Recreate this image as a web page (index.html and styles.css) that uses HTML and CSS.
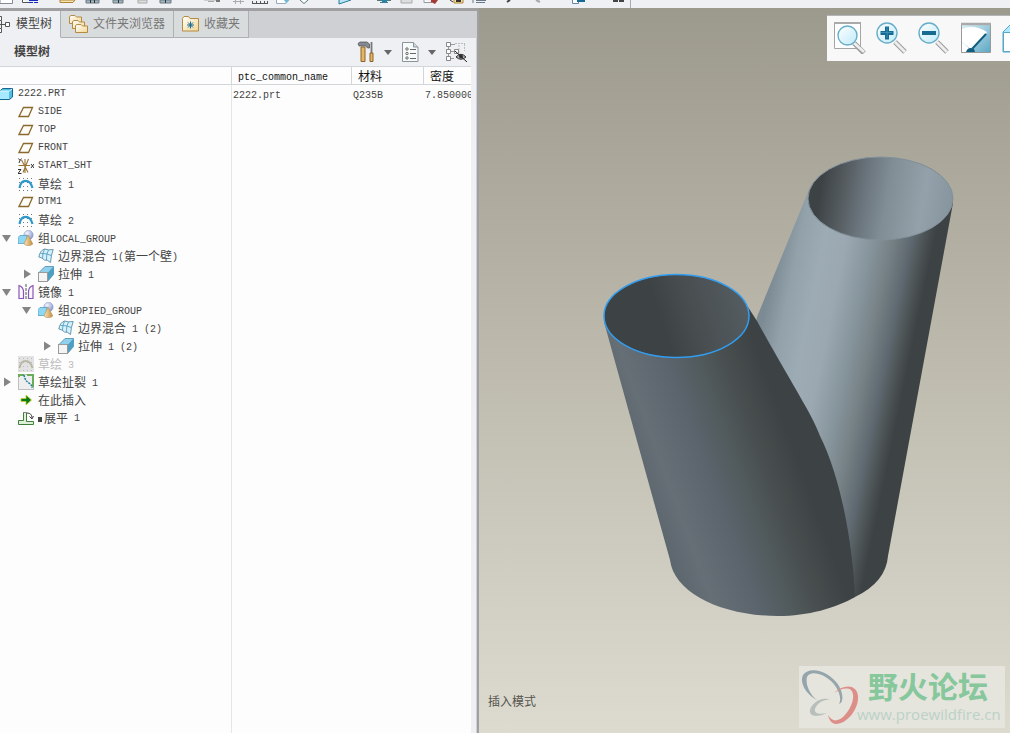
FILE: index.html
```html
<!DOCTYPE html>
<html lang="zh-CN">
<head>
<meta charset="utf-8">
<title>2222.PRT</title>
<link rel="stylesheet" href="styles.css">
</head>
<body>
<svg class="defs" aria-hidden="true">
  <defs>
    <linearGradient id="gold" x1="0" y1="0" x2="1" y2="1"><stop offset="0" stop-color="#fff"/><stop offset="1" stop-color="#f3d692"/></linearGradient>
    <linearGradient id="lens" x1="0" y1="0" x2="1" y2="1"><stop offset="0" stop-color="#fff"/><stop offset="1" stop-color="#bfeafa"/></linearGradient>
    <linearGradient id="pane" x1="0" y1="0" x2="1" y2="1"><stop offset="0" stop-color="#e4f3f8"/><stop offset="1" stop-color="#5aa7c4"/></linearGradient>
    <radialGradient id="ball" cx=".35" cy=".3" r=".8"><stop offset="0" stop-color="#f2f5ff"/><stop offset="1" stop-color="#7f90c8"/></radialGradient>
    <linearGradient id="cone" x1="0" x2="1"><stop offset="0" stop-color="#fbe9bd"/><stop offset="1" stop-color="#c08a3c"/></linearGradient>
  </defs>
  <symbol id="i-plane" viewBox="0 0 16 16"><path d="M5.500 3.500H14.500L10.500 12.500H1Z" fill="#fdfcf8" stroke="#8a6a2c" stroke-width="1.300"/></symbol>
  <symbol id="i-sketch" viewBox="0 0 16 16">
    <path d="M1 2.500H16M1 6.500H16M1 10.500H16M1 14.500H16" stroke="#777" stroke-dasharray="1 3"/>
    <path d="M1.500 12C3 2.500 12 2.500 14.500 12" fill="none" stroke="#2c98cc" stroke-width="2.200"/></symbol>
  <symbol id="i-sketch-off" viewBox="0 0 16 16"><rect width="16" height="16" fill="#e2e2e2"/>
    <path d="M1 2.500H16M1 6.500H16M1 10.500H16M1 14.500H16" stroke="#bbb" stroke-dasharray="1 3"/>
    <path d="M1.500 12C3 2.500 12 2.500 14.500 12" fill="none" stroke="#b9b7a5" stroke-width="2"/></symbol>
  <symbol id="i-group" viewBox="0 0 16 16"><circle cx="10.500" cy="5" r="4.700" fill="url(#ball)" stroke="#8c98c4" stroke-width=".5"/>
    <path d="M0 7.500L2 5.500H9V12L7.500 13.500H0Z" fill="#8fd8f4" stroke="#4697c0" stroke-width=".7"/>
    <path d="M10 5L14.800 14Q10.500 17.500 6 14Z" fill="url(#cone)" stroke="#b78b4a" stroke-width=".6"/></symbol>
  <symbol id="i-blend" viewBox="0 0 16 16"><path d="M.8 9Q2 2.500 6.500 1Q10 2.500 15.200 1.500Q13 7 12.500 14.500Q9.500 11.500 6.500 12Q4 9.500.8 9Z" fill="#d5f2fc" stroke="#5a8ca6" stroke-width=".9"/>
    <path d="M2.500 5.500Q8 5 13.300 7.500M10.500 2Q8 6 8.500 12M6.500 1.200Q4.500 5 4.500 10" fill="none" stroke="#4a94ba" stroke-width=".8"/></symbol>
  <symbol id="i-extrude" viewBox="0 0 16 16"><path d="M.5 7L7 .5H15.500V8.500L9.500 15.500H.5Z" fill="#8fd0ec" stroke="#4c8cab" stroke-width=".8"/>
    <path d="M9.500 7L15.500.5V8.500L9.500 15.500Z" fill="#4f9fc2"/><rect x=".5" y="6.500" width="9" height="9" fill="#f4f4f4" stroke="#9a9a9a"/></symbol>
  <symbol id="i-mirror" viewBox="0 0 16 16"><path d="M1 14.500V1.500Q5.500 3 5.500 8V14.500ZM15 14.500V1.500Q10.500 3 10.500 8V14.500Z" fill="#fbf7ff" stroke="#8a57b2" stroke-width="1.200"/><path d="M8 0V16" stroke="#555" stroke-dasharray="3 1"/></symbol>
  <symbol id="i-csys" viewBox="0 0 16 16"><path d="M.5 7.500H12M3.500 2L10 14.500M10.500 1L5 14.500M7 1V15" stroke="#9a7434" stroke-width="1.100"/>
    <path d="M.5.500L2 2.500L3.500.500M2 2.500L1 5M13 6L16 10M16 6L13 10M0 11.500H3L0 15.500H3.500" stroke="#333" fill="none"/></symbol>
  <symbol id="i-rip" viewBox="0 0 16 16"><rect x=".5" y=".5" width="15" height="15" fill="#eee" stroke="#888" stroke-dasharray="1 1"/>
    <path d="M1 0V3M0 1H6M9 1H15V13" stroke="#69ad58" stroke-width="2" fill="none"/><path d="M6 1Q7 7 11 9Q14 11 14 14" stroke="#147a9a" stroke-width="1.400" stroke-dasharray="2 1" fill="none"/></symbol>
  <symbol id="i-insert" viewBox="0 0 16 16"><path d="M3 6.500H8V3L13.500 8L8 13V9.500H3Z" fill="#087b16" stroke="#c5cf28" stroke-width=".8"/></symbol>
  <symbol id="i-flat" viewBox="0 0 16 16"><path d="M.5 10.500H5.500V2.500H8.500V11.500H15.500V14.500H.5Z" fill="#dff0d8" stroke="#3f7d3a"/><path d="M6 2.500H9" stroke="#888"/><path d="M9 3Q14 3 14 8M11.500 6.500L14 9L15.500 6" fill="none" stroke="#444"/></symbol>
  <symbol id="i-part" viewBox="0 0 14 14"><path d="M0 4L2.500 1.500H12.500V10L9.500 12.500H0Z" fill="#52bde6" stroke="#17678c"/><path d="M0 4H9V12H0Z" fill="#a7eaff"/><path d="M0 4H9.500L12 2" stroke="#dff8ff" fill="none"/></symbol>
  <symbol id="i-open" viewBox="0 0 10 10"><path d="M0 2H9L4.500 9Z" fill="#858585"/></symbol>
  <symbol id="i-shut" viewBox="0 0 10 10"><path d="M2 .500V9.500L9 5Z" fill="#858585"/></symbol>
  <symbol id="i-down" viewBox="0 0 8 5"><path d="M0 0H8L4 5Z" fill="#666"/></symbol>
</svg>

<div class="app">
  <header class="ribbon" aria-label="工具栏">
    <svg class="ribbon-icons" viewBox="0 0 640 8" aria-hidden="true">
      <path d="M0 0V3.500H12.500V0" fill="#fff" stroke="#889"/>
      <path d="M22.500 0V2.500H29" fill="#fff" stroke="#555"/><path d="M29 .5H38M29 2.500H33M34 2.500H38" stroke="#1428c0"/>
      <path d="M60 0V2.500H73L75 0Z" fill="#f8e4ae" stroke="#ad8438"/>
      <path d="M86 0V3H99V0ZM113 0V3H123V0ZM160 0V3H171V0Z" fill="#96b9ca" stroke="#777"/><path d="M138 0V3H147V0Z" fill="#ddd" stroke="#aaa"/>
      <path d="M90.500 0V3M94.500 0V3M118.500 0V3M165.500 0V3" stroke="#333"/>
      <path d="M204 0H218M208 1.500H214M233 1.500H244M235.500 0V4M240.500 0V4" stroke="#aaa" fill="none"/><path d="M216 0H220V2H216Z" fill="#777"/>
      <path d="M252 3.500H268M252.500 1V3M256.500 1V3M260.500 1V3M264.500 1V3M267.500 1V3" stroke="#555"/>
      <path d="M276.500 0V3.500H286L289 0" fill="#fff" stroke="#9ab"/><path d="M284 0H289L286 3Z" fill="#67b9d8"/>
      <path d="M300 0L304 3.500L308 0" fill="#fff" stroke="#577"/><path d="M339 0V4L351 0" fill="#b7e5f4" stroke="#297c9b"/>
      <path d="M377 .5H391M380 2.500H388" stroke="#577"/><path d="M382 0H387V3H382Z" fill="#2c83a8"/><path d="M401 0V3H412V0" fill="#ddd" stroke="#aaa"/>
      <path d="M424 0V2.500H432" fill="#fff" stroke="#999"/><path d="M431 0H438L435 4L431 2Z" fill="#a43a36"/>
      <path d="M450 0L453 2" stroke="#333"/><path d="M454 0V3H463V0" fill="#f9dfa4" stroke="#ad8438"/><path d="M456 1H461" stroke="#333" stroke-width="2"/>
      <path d="M473 0V3M476 .5H486M476 2.500H485" stroke="#678"/><path d="M507 2L510 0" stroke="#444" stroke-width="2"/><path d="M536 0L540 2" stroke="#aaa" stroke-width="2"/>
      <path d="M572.500 0V3.500H578.500V0" fill="#fff" stroke="#68a"/><path d="M577 0H585V2H577Z" fill="#176b92"/><path d="M613 0H618V2H613ZM619 0H624V2H619Z" fill="#444"/><path d="M630.500 0V8" stroke="#aaa"/>
    </svg>
  </header>

  <aside class="navigator">
    <nav class="tabs" role="tablist">
      <button class="tab active" role="tab" aria-selected="true">
        <svg class="tab-tree" viewBox="0 0 10 20"><path d="M0 10.500H5M1.500 7V14" stroke="#555"/><g fill="#fff" stroke="#555"><path d="M-3 2.500H1.500V6.500H-3ZM5.500 8.500H9.500V12.500H5.500ZM-3 14.500H1.500V18.500H-3Z"/></g></svg>
        <span>模型树</span></button>
      <button class="tab" role="tab" aria-selected="false">
        <svg class="tab-folders" viewBox="0 0 20 20"><g fill="url(#gold)" stroke="#b58b43"><path d="M.5 9.500V2.500L2 1.500H6L7.500 3H12.500V9.500Z"/><path d="M3.500 14.500V7.500L5 6.500H9L10.500 8H15.500V14.500Z"/><path d="M6.500 18.500V11.500L8 10.500H12L13.500 12H18.500V18.500Z"/></g></svg>
        <span>文件夹浏览器</span></button>
      <button class="tab" role="tab" aria-selected="false">
        <svg class="tab-fav" viewBox="0 0 18 16"><path d="M.5 15V2.500L2 .500H6.500L8 2.500H16.500V15Z" fill="url(#gold)" stroke="#b58b43"/><path d="M8.500 5.500V12.500M5 9H12M6 6.500L11 11.500M11 6.500L6 11.500" stroke="#176b92"/></svg>
        <span>收藏夹</span></button>
    </nav>

    <div class="panel">
      <div class="panel-head">
        <h1>模型树</h1>
        <div class="tools">
          <button aria-label="设置"><svg width="18" height="22" viewBox="0 0 18 22"><path d="M1 2.500L3 1H10L12.500 3V7H10.500L9 5H2Z" fill="#858991" stroke="#4b4d53" stroke-width=".7"/><path d="M4 6H8V20.500H4Z" fill="#e3b565" stroke="#8e642a"/><path d="M14.500 1V12" stroke="#777" stroke-width="1.800"/><path d="M13 12H16V20.500H13Z" fill="#e3b565" stroke="#8e642a"/></svg></button>
          <button aria-label="设置菜单"><svg width="8" height="5"><use href="#i-down"/></svg></button>
          <button aria-label="显示"><svg width="17" height="20" viewBox="0 0 17 20"><path d="M.5.500H11.500L16 5V19.500H.5Z" fill="#f7fafb" stroke="#8d9499"/><path d="M11.500.500V5H16" fill="#c9d9df" stroke="#8d9499"/><g fill="none" stroke="#666"><circle cx="5" cy="7" r="1.200"/><circle cx="5" cy="11.500" r="1.200"/><circle cx="5" cy="16" r="1.200"/><path d="M8 7.500H14M8 11.500H14M8 16.500H14"/></g></svg></button>
          <button aria-label="显示菜单"><svg width="8" height="5"><use href="#i-down"/></svg></button>
          <button aria-label="隐藏项"><svg width="22" height="20" viewBox="0 0 22 20"><path d="M2.500 3V17M5 2.500H9M5 9.500H9M5 16.500H8" stroke="#999"/><path d="M9 1.500H19M13 3V14M18.500 2V9" stroke="#bbb" stroke-dasharray="2 1" fill="none"/><g fill="#fff" stroke="#888"><path d="M.5.500H4.500V4.500H.5ZM.5 7.500H4.500V11.500H.5ZM.5 14.500H4.500V18.500H.5ZM8.500 7.500H12.500V11.500H8.500Z"/></g><path d="M10 15Q15 9.500 20 15Q15 19.500 10 15Z" fill="#aaa" stroke="#333"/><circle cx="15" cy="14.500" r="2" fill="#333"/><path d="M9 9L21 20" stroke="#222"/></svg></button>
        </div>
      </div>

      <div class="grid">
      <table class="tree">
        <colgroup><col class="c-name"><col class="c-common"><col class="c-mat"><col></colgroup>
        <thead><tr><th aria-label="名称"></th><th><span class="m">ptc_common_name</span></th><th>材料</th><th>密度</th></tr></thead>
        <tbody>
          <tr><td><div class="node root"><svg><use href="#i-part"/></svg><span class="m">2222.PRT</span></div></td><td><span class="m">2222.prt</span></td><td><span class="m">Q235B</span></td><td><span class="m">7.850000</span></td></tr>
          <tr><td><div class="node"><svg><use href="#i-plane"/></svg><span class="m">SIDE</span></div></td></tr>
          <tr><td><div class="node"><svg><use href="#i-plane"/></svg><span class="m">TOP</span></div></td></tr>
          <tr><td><div class="node"><svg><use href="#i-plane"/></svg><span class="m">FRONT</span></div></td></tr>
          <tr><td><div class="node"><svg><use href="#i-csys"/></svg><span class="m">START_SHT</span></div></td></tr>
          <tr><td><div class="node"><svg><use href="#i-sketch"/></svg><span class="label">草绘<span class="m"> 1</span></span></div></td></tr>
          <tr><td><div class="node"><svg><use href="#i-plane"/></svg><span class="m">DTM1</span></div></td></tr>
          <tr><td><div class="node"><svg><use href="#i-sketch"/></svg><span class="label">草绘<span class="m"> 2</span></span></div></td></tr>
          <tr><td><div class="node parent"><button aria-label="折叠"><svg><use href="#i-open"/></svg></button><svg><use href="#i-group"/></svg><span class="label">组<span class="m">LOCAL_GROUP</span></span></div></td></tr>
          <tr><td><div class="node l2"><svg><use href="#i-blend"/></svg><span class="label">边界混合<span class="m"> 1(</span>第一个壁<span class="m">)</span></span></div></td></tr>
          <tr><td><div class="node l2 parent"><button aria-label="展开"><svg><use href="#i-shut"/></svg></button><svg><use href="#i-extrude"/></svg><span class="label">拉伸<span class="m"> 1</span></span></div></td></tr>
          <tr><td><div class="node parent"><button aria-label="折叠"><svg><use href="#i-open"/></svg></button><svg><use href="#i-mirror"/></svg><span class="label">镜像<span class="m"> 1</span></span></div></td></tr>
          <tr><td><div class="node l2 parent"><button aria-label="折叠"><svg><use href="#i-open"/></svg></button><svg><use href="#i-group"/></svg><span class="label">组<span class="m">COPIED_GROUP</span></span></div></td></tr>
          <tr><td><div class="node l3"><svg><use href="#i-blend"/></svg><span class="label">边界混合<span class="m"> 1 (2)</span></span></div></td></tr>
          <tr><td><div class="node l3 parent"><button aria-label="展开"><svg><use href="#i-shut"/></svg></button><svg><use href="#i-extrude"/></svg><span class="label">拉伸<span class="m"> 1 (2)</span></span></div></td></tr>
          <tr><td><div class="node off"><svg><use href="#i-sketch-off"/></svg><span class="label">草绘<span class="m"> 3</span></span></div></td></tr>
          <tr><td><div class="node parent"><button aria-label="展开"><svg><use href="#i-shut"/></svg></button><svg><use href="#i-rip"/></svg><span class="label">草绘扯裂<span class="m"> 1</span></span></div></td></tr>
          <tr><td><div class="node"><svg><use href="#i-insert"/></svg><span class="label">在此插入</span></div></td></tr>
          <tr><td><div class="node"><svg><use href="#i-flat"/></svg><span class="label flagged">展平<span class="m"> 1</span></span></div></td></tr>
        </tbody>
      </table>
      </div>
    </div>
  </aside>

  <main class="viewport">
    <svg class="model" viewBox="479 8 531 725" role="img" aria-label="零件模型">
      <defs>
        <linearGradient id="right-wall" gradientUnits="userSpaceOnUse" x1="757" y1="345" x2="911" y2="377"><stop offset="0" stop-color="#7c8a93"/><stop offset=".13" stop-color="#93a1aa"/><stop offset=".28" stop-color="#9dabb4"/><stop offset=".42" stop-color="#9ba8b1"/><stop offset=".58" stop-color="#86949c"/><stop offset=".7" stop-color="#778286"/><stop offset=".82" stop-color="#5f6971"/><stop offset=".9" stop-color="#4d5455"/><stop offset=".97" stop-color="#3d4245"/></linearGradient>
        <linearGradient id="left-wall" gradientUnits="userSpaceOnUse" x1="634" y1="460" x2="789" y2="403"><stop offset="0" stop-color="#5d676e"/><stop offset=".15" stop-color="#666e76"/><stop offset=".4" stop-color="#5b646c"/><stop offset=".58" stop-color="#515a5c"/><stop offset=".78" stop-color="#464b4c"/><stop offset=".93" stop-color="#3d4245"/></linearGradient>
        <linearGradient id="right-bore" gradientUnits="userSpaceOnUse" x1="813" y1="190" x2="952" y2="214"><stop offset=".05" stop-color="#3d4245"/><stop offset=".18" stop-color="#50575a"/><stop offset=".35" stop-color="#69737b"/><stop offset=".52" stop-color="#808d94"/><stop offset=".78" stop-color="#94a1aa"/><stop offset="1" stop-color="#86949d"/></linearGradient>
        <linearGradient id="left-bore" gradientUnits="userSpaceOnUse" x1="610" y1="335" x2="743" y2="292"><stop offset=".38" stop-color="#3d4245"/><stop offset=".62" stop-color="#494e50"/><stop offset="1" stop-color="#545d62"/></linearGradient>
      </defs>
      <path d="M808 192L757 317L740 400L800 610L855 597Q886 582 888 556L953 203Q950 160 880 157Q820 160 808 192Z" fill="url(#right-wall)"/>
      <ellipse cx="880.500" cy="198.500" rx="72.500" ry="41.500" fill="url(#right-bore)" stroke="#82909a"/>
      <path d="M604 322L670 560C674 593 722 616 778 616C808 616 836 608 855 597C853 548 842 480 820 436C812 414 795 390 757 321L748 307L676 316Z" fill="url(#left-wall)"/>
      <ellipse cx="676.500" cy="316" rx="72.500" ry="41.500" fill="url(#left-bore)" stroke="#329df0" stroke-width="1.500"/>
    </svg>

    <div class="view-tools">
      <button aria-label="重新调整"><svg width="32" height="32" viewBox="0 0 32 32"><path d="M.5.500H26.500V26.500H.5Z" fill="#fff" stroke="#a5a5a5"/><path d="M0 1H27" stroke="#aaa" stroke-width="2"/><path d="M20 21L30 31" stroke="#999" stroke-width="5"/><path d="M20 21L30 30" stroke="#eee" stroke-width="3"/><circle cx="13.500" cy="13.500" r="9.500" fill="url(#lens)" stroke="#68aec8" stroke-width="1.400"/></svg></button>
      <button aria-label="放大"><svg width="32" height="32" viewBox="0 0 32 32"><path d="M19 20L29 30" stroke="#999" stroke-width="5"/><path d="M19 20L29 30" stroke="#eee" stroke-width="3"/><circle cx="11" cy="11" r="10" fill="url(#lens)" stroke="#68aec8" stroke-width="1.400"/><path d="M11 4.500V17.500M4.500 11H17.500" stroke="#176b92" stroke-width="4"/><path d="M11 5V16M5 10.500H16" stroke="#388fb3"/></svg></button>
      <button aria-label="缩小"><svg width="32" height="32" viewBox="0 0 32 32"><path d="M19 20L29 30" stroke="#999" stroke-width="5"/><path d="M19 20L29 30" stroke="#eee" stroke-width="3"/><circle cx="11" cy="11" r="10" fill="url(#lens)" stroke="#68aec8" stroke-width="1.400"/><path d="M4 11H18" stroke="#176b92" stroke-width="4"/></svg></button>
      <button aria-label="重画"><svg width="32" height="32" viewBox="0 0 32 32"><path d="M1.500 1.500H30.500V30.500H1.500Z" fill="url(#pane)" stroke="#999"/><path d="M2 7Q14 2 27 10L12 28L2 20Z" fill="#fff"/><path d="M2 20L12 29L10 30H2Z" fill="#fff"/><path d="M1 2H31" stroke="#aaa" stroke-width="2.500"/><path d="M12 27L26 12" stroke="#125d80" stroke-width="2"/><path d="M6 30Q8 24 14 27L15 30Z" fill="#125d80"/></svg></button>
      <button aria-label="显示样式"><svg width="32" height="32" viewBox="0 0 32 32"><path d="M1 10L10 1H24V23L16 30H1Z" fill="#aeeaff" stroke="#57a7c6"/><path d="M1.500 10.500H16V29.500H1.500Z" fill="#fff" stroke="#57a7c6"/></svg></button>
    </div>

    <p class="status">插入模式</p>

    <div class="watermark">
      <svg viewBox="0 0 60 62" aria-hidden="true">
        <path fill-rule="evenodd" fill="#94a5ab" d="M3 9C9 0 29 4 39 20C44 29 43 37 39 38C42 33 39 24 33 17C24 7 10 4 7 11C5 18 10 29 17 34C7 29 -1 17 3 9Z"/>
        <path fill="#b7bfbb" d="M30 34C22 30 12 37 10 44C9 50 16 52 27 47C18 49 14 47 15 43C17 37 24 33 30 34Z"/>
        <path fill="#de8e89" d="M34 27C45 17 57 19 58 30C59 43 47 58 36 58C32 58 29 54 28 49C32 56 38 56 44 50C52 42 56 29 51 24C47 21 40 23 34 27Z"/>
      </svg>
      <div class="mark-text"><strong>野火论坛</strong><span>www.proewildfire.cn</span></div>
    </div>
  </main>
</div>
</body>
</html>
```
FILE: styles.css
```css
* { box-sizing: border-box; }

body {
  margin: 0;
  color: #444;
  font: 12px/18px "Liberation Sans", "Noto Sans CJK SC", sans-serif;
}

button {
  display: flex;
  align-items: center;
  padding: 0;
  border: 0;
  background: none;
  color: inherit;
  font: inherit;
}

svg { display: block; flex: none; }
.defs { position: absolute; width: 0; height: 0; }

.m {
  font-family: "Liberation Mono", monospace;
  font-size: 10px;
  line-height: 12px;
  white-space: pre;
}

.app {
  display: grid;
  grid-template: 8px 1fr / 479px minmax(0, 1fr);
  min-height: 100vh;
}

.ribbon { grid-column: 1 / -1; background: #eef0f3; overflow: hidden; }
.ribbon-icons { width: 640px; height: 8px; }

/* navigator */
.navigator {
  display: flex;
  flex-direction: column;
  min-width: 0;
  border-top: 3px solid #a0a0a2;
  border-right: 2px solid #a0a0a2;
  background: #cfd0d3;
}

.tabs { display: flex; height: 27px; }
.tab {
  gap: 4px;
  padding: 0 8px;
  border: solid #aeb1b3;
  border-width: 0 1px 1px 0;
  background: #d9dcdd;
  color: #777;
  white-space: nowrap;
}
.tab.active {
  gap: 6px;
  padding-left: 0;
  border-bottom-color: #eef0f3;
  background: #eef0f3;
  color: #444;
}
.tab-tree { width: 10px; height: 20px; }
.tab-folders { width: 20px; height: 20px; }
.tab-fav { width: 18px; height: 16px; }

.panel {
  display: flex;
  flex: 1;
  flex-direction: column;
  margin-right: 1px;
  padding-right: 5px;
  background: #eef0f3;
}
.panel-head {
  display: flex;
  align-items: center;
  justify-content: space-between;
  height: 28px;
  padding: 0 3px 0 14px;
}
h1 { margin: 0; font-size: 12px; font-weight: bold; }
.tools { display: flex; align-items: center; }
.tools button:nth-child(odd) { margin-right: 9px; }
.tools button:nth-child(even) { margin-right: 10px; }
.tools button:last-child { margin-right: 0; }

.grid {
  flex: 1;
  overflow: hidden;
  border-top: 1px solid #d2d6d8;
  background: linear-gradient(#e6e6e6, #e6e6e6) 231px 0 / 1px 100% no-repeat #fdfdfd;
}
.tree { width: 100%; border-collapse: separate; border-spacing: 0; table-layout: fixed; }
.c-name { width: 231px; }
.c-common { width: 120px; }
.c-mat { width: 72px; }
th, td { height: 18px; padding: 0 0 0 2px; overflow: hidden; white-space: nowrap; line-height: 16px; text-align: left; }
th {
  padding: 2px 0 0 6px;
  border-bottom: 1px solid #d2d6d8;
  border-left: 1px solid #d2d6d8;
  color: #111;
  font-weight: normal;
  line-height: 14px;
}
th:first-child { border-left: 0; }
td:first-child { padding: 0; }

.node { display: flex; align-items: center; gap: 4px; height: 18px; padding-left: 18px; }
.node > svg { width: 16px; height: 16px; }
.node.root { padding-left: 0; }
.node.root > svg { width: 14px; height: 14px; }
.node.l2 { padding-left: 38px; }
.node.l3 { padding-left: 58px; }
.node.parent { padding-left: 2px; }
.node.l2.parent { padding-left: 22px; }
.node.l3.parent { padding-left: 42px; }
.node button { width: 12px; }
.node button svg { width: 10px; height: 10px; }
.label { padding-top: 2px; }
.label .m { vertical-align: 1px; }
.off { color: #bbb; }
.flagged { display: flex; align-items: center; gap: 2px; }
.flagged::before { width: 4px; height: 5px; background: #444; content: ""; }
.flagged .m { margin-left: -2px; }

/* graphics area */
.viewport {
  position: relative;
  overflow: hidden;
  background: linear-gradient(#9c9a8d, #b5b2a5 36%, #d2d0c4 82%, #dddbd0);
}
.model { position: absolute; inset: 0; width: 100%; height: 100%; }

.view-tools {
  position: absolute;
  top: 7px;
  right: 0;
  display: flex;
  gap: 10px;
  width: 183px;
  height: 46px;
  padding: 6px 7px;
  overflow: hidden;
  border-top: 1px solid #b4b5b8;
  background: #f8f8f8;
}
.view-tools button { flex: none; align-items: flex-start; }

.status { position: absolute; bottom: 22px; left: 9px; margin: 0; color: #55544f; }

.watermark {
  position: absolute;
  right: 5px;
  bottom: 5px;
  display: flex;
  width: 206px;
  height: 62px;
  background: #e5e4dd;
}
.watermark svg { width: 60px; height: 62px; margin-left: 1px; }
.mark-text { display: flex; flex-direction: column; margin-left: -3px; }
.mark-text strong {
  margin-left: 11px;
  color: #86c79b;
  font: bold 30px/38px "Noto Sans CJK SC", sans-serif;
}
.mark-text span { color: #bbd2c7; font: 15px/20px "Open Sans", sans-serif; }
```
